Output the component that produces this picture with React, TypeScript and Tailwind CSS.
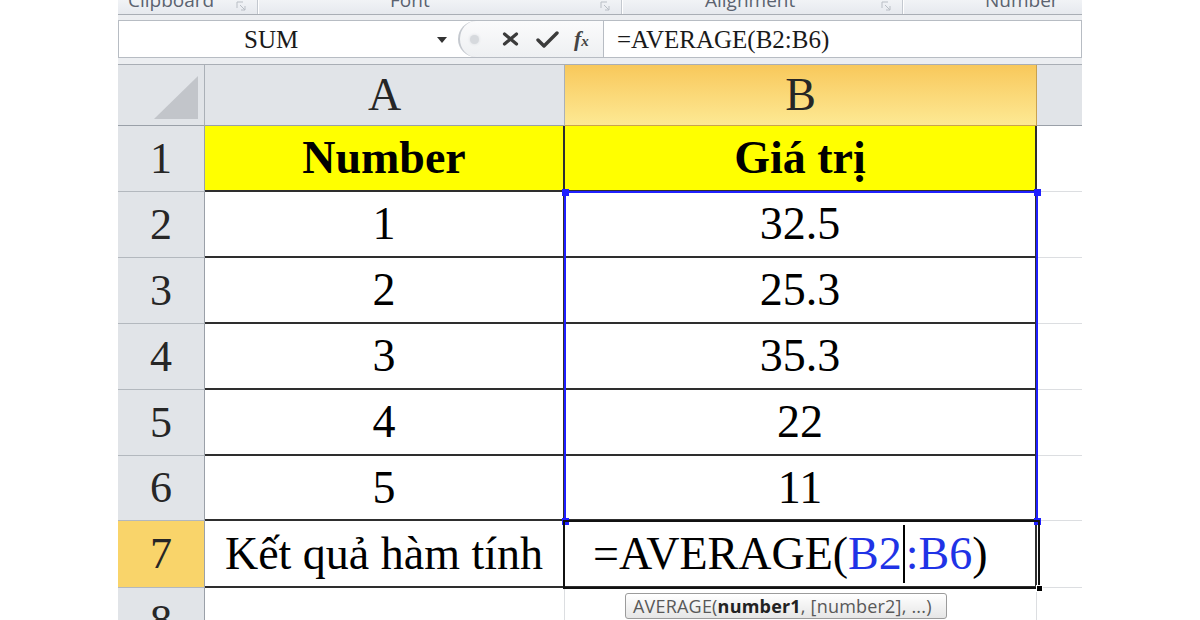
import React from 'react'

const SERIF = "font-['Liberation_Serif','Times_New_Roman',serif]"

const ROWS = [
  { n: 2, a: '1', b: '32.5' },
  { n: 3, a: '2', b: '25.3' },
  { n: 4, a: '3', b: '35.3' },
  { n: 5, a: '4', b: '22' },
  { n: 6, a: '5', b: '11' },
]

function Launcher() {
  return (
    <svg width="11" height="11" viewBox="0 0 11 11" className="absolute right-[10px] top-[1px]">
      <path d="M1 1h6M1 1v6" stroke="#b9bec5" strokeWidth="1" fill="none" />
      <path d="M4 4l5 5M9 5v4H5" stroke="#b9bec5" strokeWidth="1" fill="none" />
    </svg>
  )
}

// nhãn nhóm ribbon, bị cắt mất nửa trên
function Group({ label, w, pl, launcher = true }: { label: string; w: string; pl: string; launcher?: boolean }) {
  return (
    <div className={`relative h-full ${w} border-r border-r-[#c3c8cf] shadow-[1px_0_0_#fff]`}>
      <div className={`-mt-[10px] ${pl} text-[19px] leading-[20px] text-[#5b6370] whitespace-nowrap font-['Open_Sans','Liberation_Sans',sans-serif]`}>
        {label}
      </div>
      {launcher && <Launcher />}
    </div>
  )
}

function Ribbon() {
  return (
    <div className="flex h-[14px] overflow-hidden bg-gradient-to-b from-[#f1f3f6] to-[#e6e9ee]">
      <Group label="Clipboard" w="w-[140px]" pl="pl-[10px]" />
      <Group label="Font" w="w-[364px]" pl="pl-[132px]" />
      <Group label="Alignment" w="w-[281px]" pl="pl-[83px]" />
      <div className="h-full flex-1">
        <div className="-mt-[10px] pl-[82px] text-[19px] leading-[20px] text-[#5b6370] font-['Open_Sans','Liberation_Sans',sans-serif]">
          Number
        </div>
      </div>
    </div>
  )
}

function FormulaBar() {
  return (
    <div className="border-t border-t-[#a9aeb5] border-b border-b-[#a9aeb5] bg-[#eceef1] pt-[5px] pb-[6px]">
      <div className="flex h-[38px] border border-[#b7bcc3] bg-white">
        {/* name box */}
        <div className="relative flex w-[339px] items-center">
          <span className={`${SERIF} pl-[125px] text-[25px] leading-none text-[#1a1a1a]`}>SUM</span>
          <svg width="10" height="6" viewBox="0 0 10 6" className="absolute left-[318px] top-[16px]">
            <path d="M0 0h10L5 6z" fill="#333" />
          </svg>
        </div>
        {/* nút hủy / nhập / fx */}
        <div className="relative flex w-[145px] items-center rounded-l-[19px] border-l-2 border-l-[#c5c9cf] bg-gradient-to-b from-[#fbfbfc] to-[#eef0f2]">
          <div className="ml-[10px] h-[9px] w-[9px] rounded-full bg-[#d6d9dd] shadow-[0_0_3px_#d6d9dd]" />
          <svg width="17" height="14" viewBox="0 0 17 14" className="ml-[23px]">
            <path d="M2.5 2l12 10M14.5 2l-12 10" stroke="#3b3b3b" strokeWidth="3.2" strokeLinecap="round" />
          </svg>
          <svg width="23" height="17" viewBox="0 0 23 17" className="ml-[17px]">
            <path d="M2 9l6 6L21 2" stroke="#3b3b3b" strokeWidth="3.4" strokeLinecap="round" strokeLinejoin="round" fill="none" />
          </svg>
          <span className={`${SERIF} ml-[15px] text-[22px] font-bold italic leading-none text-[#444]`}>
            f<span className="text-[15px]">x</span>
          </span>
        </div>
        <div className="w-[1px] bg-[#b7bcc3]" />
        <div className="flex flex-1 items-center">
          <span className={`${SERIF} pl-[13px] text-[25px] leading-none text-[#1a1a1a]`}>=AVERAGE(B2:B6)</span>
        </div>
      </div>
    </div>
  )
}

const rowHead = `${SERIF} flex items-center justify-center border-r border-r-[#9aa0a8] border-b border-b-[#b3b8be] text-[44px] leading-none text-[#262626]`
const cell = `${SERIF} flex items-center justify-center border-r-2 border-b-2 border-[#2e2e2e] text-[46px] leading-none text-black`
const spare = 'border-b border-b-[#dcdee1]'

function Sheet() {
  return (
    <div className="relative">
      <div className="grid grid-cols-[87px_360px_472px_45px] grid-rows-[61px_66px_66px_66px_66px_66px_65px_67px_66px]">
        {/* tiêu đề cột */}
        <div className="relative bg-[#e1e4e8] border-r border-r-[#aab0b7] border-b border-b-[#9aa0a8]">
          <svg width="44" height="43" viewBox="0 0 44 43" className="absolute bottom-[6px] right-[6px]">
            <path d="M44 0v43H0z" fill="#c2c5ca" />
          </svg>
        </div>
        <div className={`${SERIF} flex items-center justify-center bg-[#e1e4e8] border-r border-r-[#aab0b7] border-b border-b-[#9aa0a8] text-[46px] leading-none text-[#262626]`}>
          A
        </div>
        <div className={`${SERIF} flex items-center justify-center bg-gradient-to-b from-[#f8c85a] to-[#fde993] border-r border-r-[#c9a24e] border-b border-b-[#c9a24e] text-[46px] leading-none text-[#262626]`}>
          B
        </div>
        <div className="bg-[#e1e4e8] border-b border-b-[#9aa0a8]" />

        {/* dòng 1 */}
        <div className={`${rowHead} bg-[#e1e4e8]`}>1</div>
        <div className={`${cell} bg-[#ffff00] font-bold`}>Number</div>
        <div className={`${cell} bg-[#ffff00] font-bold`}>Giá trị</div>
        <div className={spare} />

        {ROWS.map(r => (
          <React.Fragment key={r.n}>
            <div className={`${rowHead} bg-[#e1e4e8]`}>{r.n}</div>
            <div className={cell}>{r.a}</div>
            <div className={cell}>{r.b}</div>
            <div className={spare} />
          </React.Fragment>
        ))}

        {/* dòng 7 - đang nhập công thức */}
        <div className={`${rowHead} bg-[#f9d46a]`}>7</div>
        <div className={cell}>Kết quả hàm tính</div>
        <div className={`${SERIF} flex items-center border-r-2 border-b-2 border-[#2e2e2e] pl-[28px] text-[46px] leading-none text-black whitespace-nowrap`}>
          =AVERAGE(
          <span className="text-[#1f33e6]">B2</span>
          <span className="mx-[1px] inline-block h-[58px] w-[2px] bg-black" />
          <span className="text-[#1f33e6]">:B6</span>)
        </div>
        <div className={spare} />

        {/* dòng 8 */}
        <div className={`${rowHead} bg-[#e1e4e8]`}>8</div>
        <div className="border-r border-r-[#dcdee1]" />
        <div className="border-r border-r-[#dcdee1]" />
        <div />
      </div>

      {/* vùng tham chiếu B2:B6 */}
      <div className="pointer-events-none absolute left-[446px] top-[126px] h-[331px] w-[474px] border-2 border-[#1f1fff]" />
      <div className="absolute left-[444px] top-[124px] h-[7px] w-[7px] bg-[#1f1fff]" />
      <div className="absolute left-[916px] top-[124px] h-[7px] w-[7px] bg-[#1f1fff]" />
      <div className="absolute left-[444px] top-[453px] h-[7px] w-[7px] bg-[#1f1fff]" />
      <div className="absolute left-[916px] top-[453px] h-[7px] w-[7px] bg-[#1f1fff]" />

      {/* ô đang chọn B7 */}
      <div className="pointer-events-none absolute left-[445px] top-[455px] h-[69px] w-[477px] border-2 border-[#111]" />
      <div className="absolute left-[918px] top-[520px] h-[7px] w-[7px] border border-white bg-black" />

      {/* gợi ý cú pháp */}
      <div className="absolute left-[507px] top-[528px] flex h-[26px] w-[322px] items-center whitespace-nowrap rounded-[3px] border border-[#9b9b9b] bg-gradient-to-b from-white to-[#e6e6e6] pl-[7px] text-[18px] leading-none text-[#595959] font-['Open_Sans','Liberation_Sans',sans-serif] tracking-[0.2px]">
        AVERAGE(<span className="font-bold text-[#222]">number1</span>, [number2], ...)
      </div>
    </div>
  )
}

export default function App() {
  return (
    <div className="h-[620px] w-[1200px] overflow-hidden bg-white">
      <div className="ml-[118px] w-[964px]">
        <Ribbon />
        <FormulaBar />
        <Sheet />
      </div>
    </div>
  )
}
